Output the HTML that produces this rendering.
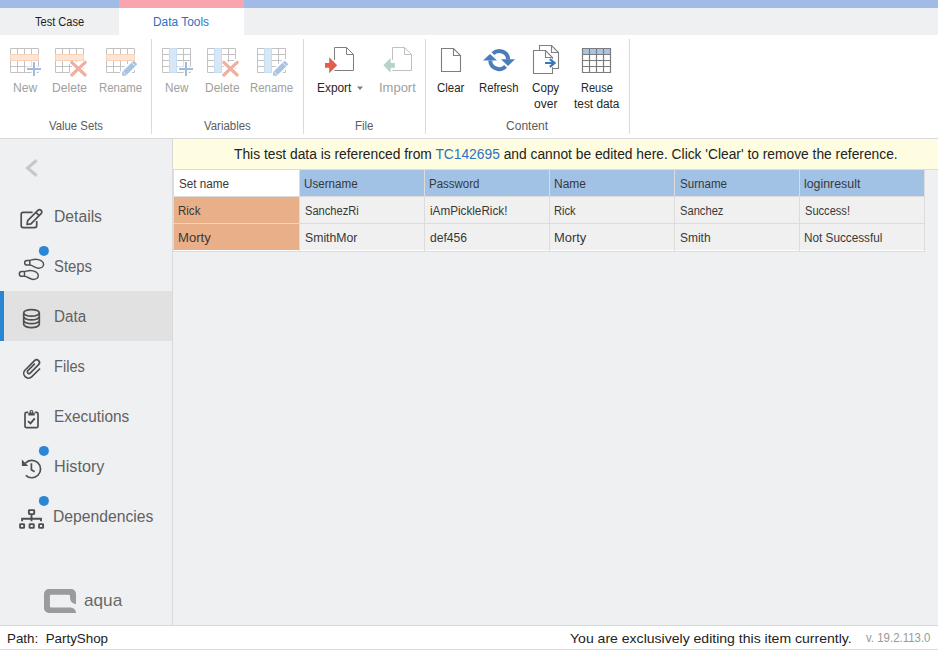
<!DOCTYPE html>
<html><head><meta charset="utf-8">
<style>
*{margin:0;padding:0;box-sizing:border-box}
html,body{width:938px;height:650px;overflow:hidden;background:#fff;font-family:"Liberation Sans",sans-serif}
body{position:relative}
.a{position:absolute}
.t{position:absolute;line-height:1;white-space:pre;transform-origin:0 0}
.c{text-align:center}
svg{position:absolute;overflow:visible}
.rb{font-size:11.6px;color:#a2a2a2;top:82.4px}
.gl{font-size:11.4px;color:#5c5c5c;top:120.6px}
.rk{font-size:11.6px;color:#2a2a2a}
.sl{font-size:16px;color:#626262;left:53.6px;transform:scaleX(0.965);transform-origin:0 0}
.td{font-size:11.5px;color:#383838}
</style></head><body>
<!-- top color bar -->
<div class="a" style="left:0;top:0;width:938px;height:8px;background:#9fbbe6"></div>
<div class="a" style="left:119px;top:0;width:125px;height:8px;background:#f8a5ae"></div>
<!-- tab strip -->
<div class="a" style="left:0;top:8px;width:938px;height:27px;background:#eff0f2"></div>
<div class="a" style="left:119px;top:8px;width:125px;height:27px;background:#fff"></div>

<!-- ribbon separators -->
<div class="a" style="left:151px;top:39px;width:1px;height:95px;background:#dadada"></div>
<div class="a" style="left:303px;top:39px;width:1px;height:95px;background:#dadada"></div>
<div class="a" style="left:425px;top:39px;width:1px;height:95px;background:#dadada"></div>
<div class="a" style="left:629px;top:39px;width:1px;height:95px;background:#dadada"></div>
<div class="a" style="left:0;top:138px;width:938px;height:1px;background:#d9d9d9"></div>

<!-- ribbon labels -->




<!-- ribbon icons -->
<svg width="938" height="140" style="left:0;top:0">
  <defs>
    <path id="g4" d="M0.5,0.5H28.5V24.5H0.5Z M7.5,0.5V24.5 M14.5,0.5V24.5 M21.5,0.5V24.5 M0.5,6.5H28.5 M0.5,12.5H28.5 M0.5,18.5H28.5" fill="none" stroke="#c2c2c2" stroke-width="1"/>
    <rect id="bandR" x="0.5" y="6.5" width="28" height="6" fill="#fde5d5" stroke="#f9d2b8" stroke-width="1"/>
    <rect id="bandC" x="7.5" y="0.5" width="7" height="24" fill="#d7e7f6" stroke="#c6ddf3" stroke-width="1"/>
    <path id="plusH" d="M24,13V29 M16,21H32" stroke="#fff" stroke-width="5"/>
    <path id="plus" d="M24,14V28 M17,21H31" stroke="#9fbbdc" stroke-width="2"/>
    <path id="xxH" d="M16.5,13.5L30.5,27.5 M30.5,13.5L16.5,27.5" stroke="#fff" stroke-width="6.5" stroke-linecap="round"/>
    <path id="xx" d="M16.8,14.3L30.2,27 M30.2,14.3L16.8,27" stroke="#edb0a2" stroke-width="3.2" stroke-linecap="round"/>
    <g id="penH" transform="translate(16.1,27.8) rotate(-45)">
      <path d="M0,0 L2.6,-2.6 H18 A1,1 0 0 1 19,-1.6 V1.6 A1,1 0 0 1 18,2.6 H2.6 Z" fill="#fff" stroke="#fff" stroke-width="4" stroke-linejoin="round"/>
    </g>
    <g id="pen" transform="translate(16.1,27.8) rotate(-45)">
      <path d="M0,0 L2.6,-2.6 H18 A1,1 0 0 1 19,-1.6 V1.6 A1,1 0 0 1 18,2.6 H2.6 Z" fill="#a8c3e2"/>
      <path d="M3.6,-2.8V2.8 M16.1,-2.8V2.8" stroke="#fff" stroke-width="0.7"/>
    </g>
  </defs>
  <!-- Value sets -->
  <g transform="translate(10,48)"><use href="#g4"/><use href="#plusH"/><use href="#bandR"/><use href="#plus"/></g>
  <g transform="translate(55,48)"><use href="#g4"/><use href="#xxH"/><use href="#bandR"/><use href="#xx"/></g>
  <g transform="translate(106,48)"><use href="#g4"/><use href="#penH"/><use href="#bandR"/><use href="#pen"/></g>
  <!-- Variables -->
  <g transform="translate(162,48)"><use href="#g4"/><use href="#plusH"/><use href="#bandC"/><use href="#plus"/></g>
  <g transform="translate(207,48)"><use href="#g4"/><use href="#xxH"/><use href="#bandC"/><use href="#xx"/></g>
  <g transform="translate(257,48)"><use href="#g4"/><use href="#penH"/><use href="#bandC"/><use href="#pen"/></g>
  <!-- Export -->
  <path d="M334.5,60V47.5H346.5L353.5,54.5V70.5H334.5 M346.5,47.5V54.5H353.5" fill="none" stroke="#7f7f7f" stroke-width="1"/>
  <path d="M325,63H329.2V57.2L337.2,65.3L329.2,73.3V67.8H325Z" fill="#e0604a"/>
  <path d="M357,86.5H363L360,90Z" fill="#7a7a7a"/>
  <!-- Import -->
  <path d="M392.5,60V47.5H404.5L411.5,54.5V70.5H392.5 M404.5,47.5V54.5H411.5" fill="none" stroke="#c0c0c0" stroke-width="1"/>
  <path d="M394.9,63H390.7V58L383.3,65.3L390.7,72.7V67.8H394.9Z" fill="#b3d4c7"/>
  <!-- Clear -->
  <path d="M441.5,48.5H453.5L460.5,55.5V71.5H441.5Z M453.5,48.5V55.5H460.5" fill="#fff" stroke="#7f7f7f" stroke-width="1.1"/>
  <!-- Refresh -->
  <g fill="none" stroke="#4a7ebb" stroke-width="4">
    <path d="M492.9,53.6A9,9 0 0 1 508.2,59.5"/>
    <path d="M490.2,60.5A9,9 0 0 0 505.6,66.4"/>
  </g>
  <path d="M501,59.3H515L508,66Z M483,60.5H497L490,53.9Z" fill="#4a7ebb"/>
  <!-- Copy over -->
  <path d="M539.5,50.5V45.5H551.5L558.5,52.5V68.5H552.5 M551.5,45.5V52.5H558.5" fill="none" stroke="#7f7f7f" stroke-width="1.1"/>
  <path d="M533.5,50.5H545.5L552.5,57.5V73.5H533.5Z M545.5,50.5V57.5H552.5" fill="#fff" stroke="#7f7f7f" stroke-width="1.1"/>
  <path d="M549.8,59.2L554.5,63L549.8,66.8" fill="none" stroke="#fff" stroke-width="4"/>
  <path d="M545,63H554.5 M549.8,59.2L554.5,63L549.8,66.8" fill="none" stroke="#3c75b9" stroke-width="2.2"/>
  <!-- Reuse -->
  <rect x="582.5" y="48.5" width="28" height="6" fill="#a9c5e6"/>
  <path d="M582.5,48.5H610.5V72.5H582.5Z M589.5,48.5V72.5 M596.5,48.5V72.5 M603.5,48.5V72.5 M582.5,54.5H610.5 M582.5,60.5H610.5 M582.5,66.5H610.5" fill="none" stroke="#7c7c7c" stroke-width="1.2"/>
</svg>

<!-- sidebar -->
<div class="a" style="left:0;top:139px;width:172px;height:486px;background:#eff0f2"></div>
<div class="a" style="left:172px;top:139px;width:1px;height:486px;background:#d9d9d9"></div>
<div class="a" style="left:0;top:291px;width:172px;height:50px;background:#e1e1e1"></div>
<div class="a" style="left:0;top:291px;width:4px;height:50px;background:#2a86d3"></div>

<svg width="172" height="625" style="left:0;top:0">
  <path d="M36.6,160.3L27.6,168L36.6,175.7" fill="none" stroke="#c8c8c8" stroke-width="3.1"/>
  <g fill="none" stroke="#4f4f4f" stroke-width="1.7">
    <!-- details -->
    <path d="M32.6,212.3H23.2A2,2 0 0 0 21.2,214.3V225.6A2,2 0 0 0 23.2,227.6H34.7A2,2 0 0 0 36.7,225.6V221"/>
    <g transform="translate(29.3,222.25) rotate(-45)">
      <path d="M-3.2,0 L0,-2.3 H14.4 A2.3,2.3 0 0 1 14.4,2.3 H0 Z" stroke-linejoin="round"/>
      <path d="M11.6,-2.3V2.3"/>
    </g>
    <!-- steps -->
    <g id="foot"><path d="M27,260.4 H29.8 C31.5,260.2 33,259.2 35.5,259.2 C39.5,259.2 43.6,261.6 43.6,264.2 C43.6,266.8 41,268.2 38.5,268.2 C35.5,268.2 32.5,265.2 29.8,265.1 H27 A2.35,2.35 0 0 1 27,260.4 Z M29.8,260.4V265.1" stroke-width="1.5"/></g>
    <use href="#foot" transform="translate(-5.3,11.2)"/>
    <!-- data -->
    <ellipse cx="31.5" cy="312.9" rx="7.8" ry="3.3"/>
    <path d="M23.7,312.9V324.3A7.8,3.3 0 0 0 39.3,324.3V312.9 M23.7,316.6A7.8,3.3 0 0 0 39.3,316.6 M23.7,320.4A7.8,3.3 0 0 0 39.3,320.4"/>
    <!-- files -->
    <g transform="translate(32.2,369) rotate(45) scale(0.95)">
      <path d="M5.5,-5.5 V6 A5,5 0 0 1 -4.5,6 V-8 A3,3 0 0 1 1.5,-8 V4.5 A1.75,1.75 0 0 1 -2,4.5 V-5.25" stroke-width="1.8" stroke-linecap="round"/>
    </g>
    <!-- executions -->
    <path d="M28.3,412.4H26.5A1.5,1.5 0 0 0 25,413.9V426.2A1.5,1.5 0 0 0 26.5,427.7H36.5A1.5,1.5 0 0 0 38,426.2V413.9A1.5,1.5 0 0 0 36.5,412.4H34.7"/>
    
    <path d="M28,421.1L30.5,423.4L34.8,418.3" stroke-width="1.9"/>
    <!-- history -->
    <path d="M25.8,475.3A8.7,8.7 0 1 0 25.4,463.2"/>
    <path d="M31.4,463.2V469.7L34.6,471.8"/>
    <!-- dependencies -->
    <g stroke-width="1.9"><rect x="28.9" y="510.1" width="5.3" height="4" rx="0.5"/>
    <path d="M31.5,514.1V518.8 M22.1,521.3V518.8H41V521.3 M31.5,518.8V521.3"/>
    <rect x="20.1" y="524.1" width="4" height="3.8" rx="0.5"/>
    <rect x="29.6" y="524.1" width="4.2" height="3.8" rx="0.5"/>
    <rect x="39.1" y="524.1" width="4" height="3.8" rx="0.5"/></g>
  </g>
  <path d="M21.9,459.6V466.1H28.2Z" fill="#4f4f4f"/>
  <path d="M28.3,415.4V412.9H29.4L29.6,411.3A1.85,1.85 0 0 1 33.2,411.3L33.4,412.9H34.7V415.4Z M30.7,411.7A0.75,0.75 0 1 0 32.2,411.7A0.75,0.75 0 1 0 30.7,411.7Z" fill="#4f4f4f" fill-rule="evenodd"/>
  <circle cx="43.9" cy="250.9" r="5" fill="#2b87d6"/>
  <circle cx="43.9" cy="450.9" r="5" fill="#2b87d6"/>
  <circle cx="43.9" cy="500.9" r="5" fill="#2b87d6"/>
  <!-- logo -->
  <path d="M49,589H71A5,5 0 0 1 76,594V604A6,6 0 0 1 70,598V596A1.3,1.3 0 0 0 68.7,594.7H51.2A1.3,1.3 0 0 0 49.9,596V606.2A1.3,1.3 0 0 0 51.2,607.5H70.5A5.5,5.5 0 0 1 76,613H49A5,5 0 0 1 44,608V594A5,5 0 0 1 49,589Z" fill="#9b9b9b"/>
</svg>

<!-- content area -->
<div class="a" style="left:173px;top:139px;width:765px;height:486px;background:#eff0f2"></div>
<div class="a" style="left:173px;top:139px;width:765px;height:30px;background:#fefde1"></div>
<div class="a" style="left:173px;top:169px;width:765px;height:1px;background:#dcdcdc"></div>

<!-- table -->
<div class="a" style="left:173px;top:170px;width:752px;height:82px;background:#dcdcdc"></div>
<div class="a" style="left:174px;top:250px;width:125px;height:1px;background:#fff"></div>
<div class="a" style="left:300px;top:250px;width:124px;height:1px;background:#fff"></div>
<div class="a" style="left:425px;top:250px;width:124px;height:1px;background:#fff"></div>
<div class="a" style="left:550px;top:250px;width:124px;height:1px;background:#fff"></div>
<div class="a" style="left:675px;top:250px;width:124px;height:1px;background:#fff"></div>
<div class="a" style="left:800px;top:250px;width:124px;height:1px;background:#fff"></div>
<div class="a" style="left:174px;top:170px;width:125px;height:26px;background:#fff"></div>
<div class="a" style="left:300px;top:170px;width:124px;height:26px;background:#a1c1e5"></div>
<div class="a" style="left:425px;top:170px;width:124px;height:26px;background:#a1c1e5"></div>
<div class="a" style="left:550px;top:170px;width:124px;height:26px;background:#a1c1e5"></div>
<div class="a" style="left:675px;top:170px;width:124px;height:26px;background:#a1c1e5"></div>
<div class="a" style="left:800px;top:170px;width:124px;height:26px;background:#a1c1e5"></div>

<div class="a" style="left:174px;top:197px;width:125px;height:26px;background:#e9af89"></div>
<div class="a" style="left:300px;top:197px;width:124px;height:26px;background:#f0f0f0"></div>
<div class="a" style="left:425px;top:197px;width:124px;height:26px;background:#f0f0f0"></div>
<div class="a" style="left:550px;top:197px;width:124px;height:26px;background:#f0f0f0"></div>
<div class="a" style="left:675px;top:197px;width:124px;height:26px;background:#f0f0f0"></div>
<div class="a" style="left:800px;top:197px;width:124px;height:26px;background:#f0f0f0"></div>

<div class="a" style="left:174px;top:224px;width:125px;height:26px;background:#e9af89"></div>
<div class="a" style="left:300px;top:224px;width:124px;height:26px;background:#f0f0f0"></div>
<div class="a" style="left:425px;top:224px;width:124px;height:26px;background:#f0f0f0"></div>
<div class="a" style="left:550px;top:224px;width:124px;height:26px;background:#f0f0f0"></div>
<div class="a" style="left:675px;top:224px;width:124px;height:26px;background:#f0f0f0"></div>
<div class="a" style="left:800px;top:224px;width:124px;height:26px;background:#f0f0f0"></div>




<!-- status bar -->
<div class="a" style="left:0;top:625px;width:938px;height:1px;background:#d9d9d9"></div>
<div class="a" style="left:0;top:626px;width:938px;height:23px;background:#fff"></div>
<div class="a" style="left:0;top:649px;width:938px;height:1px;background:#d9d9d9"></div>
<div class="t" style="left:34.92px;top:15.84px;font-size:12px;color:#1e1e1e;transform:scaleX(0.9219)">Test Case</div>
<div class="t" style="left:153.31px;top:15.84px;font-size:12px;color:#2f70c0;transform:scaleX(0.9927)">Data Tools</div>
<div class="t" style="left:12.70px;top:81.84px;font-size:12px;color:#a0a0a0;transform:scaleX(1.0043)">New</div>
<div class="t" style="left:52.49px;top:81.84px;font-size:12px;color:#a0a0a0;transform:scaleX(1.0120)">Delete</div>
<div class="t" style="left:98.75px;top:81.84px;font-size:12px;color:#a0a0a0;transform:scaleX(0.9521)">Rename</div>
<div class="t" style="left:164.52px;top:81.84px;font-size:12px;color:#a0a0a0;transform:scaleX(0.9783)">New</div>
<div class="t" style="left:204.50px;top:81.84px;font-size:12px;color:#a0a0a0;transform:scaleX(0.9970)">Delete</div>
<div class="t" style="left:250.45px;top:81.84px;font-size:12px;color:#a0a0a0;transform:scaleX(0.9498)">Rename</div>
<div class="t" style="left:317.31px;top:81.84px;font-size:12px;color:#262626;transform:scaleX(0.9911)">Export</div>
<div class="t" style="left:379.21px;top:81.84px;font-size:12px;color:#a0a0a0;transform:scaleX(1.0823)">Import</div>
<div class="t" style="left:436.93px;top:81.84px;font-size:12px;color:#262626;transform:scaleX(0.9534)">Clear</div>
<div class="t" style="left:478.56px;top:81.84px;font-size:12px;color:#262626;transform:scaleX(0.9404)">Refresh</div>
<div class="t" style="left:532.22px;top:81.84px;font-size:12px;color:#262626;transform:scaleX(0.9708)">Copy</div>
<div class="t" style="left:580.88px;top:81.84px;font-size:12px;color:#262626;transform:scaleX(0.9187)">Reuse</div>
<div class="t" style="left:534.00px;top:97.84px;font-size:12px;color:#262626;transform:scaleX(1.0044)">over</div>
<div class="t" style="left:574.40px;top:97.84px;font-size:12px;color:#262626;transform:scaleX(0.9869)">test data</div>
<div class="t" style="left:48.61px;top:119.84px;font-size:12px;color:#5c5c5c;transform:scaleX(0.9452)">Value Sets</div>
<div class="t" style="left:204.40px;top:119.84px;font-size:12px;color:#5c5c5c;transform:scaleX(0.9506)">Variables</div>
<div class="t" style="left:355.04px;top:119.84px;font-size:12px;color:#5c5c5c;transform:scaleX(0.9551)">File</div>
<div class="t" style="left:506.20px;top:119.84px;font-size:12px;color:#5c5c5c;transform:scaleX(1.0024)">Content</div>
<div class="t" style="left:53.82px;top:209.46px;font-size:16px;color:#626262;transform:scaleX(0.9809)">Details</div>
<div class="t" style="left:54.15px;top:259.46px;font-size:16px;color:#626262;transform:scaleX(0.9270)">Steps</div>
<div class="t" style="left:53.96px;top:309.46px;font-size:16px;color:#626262;transform:scaleX(0.9508)">Data</div>
<div class="t" style="left:53.91px;top:359.46px;font-size:16px;color:#626262;transform:scaleX(0.9122)">Files</div>
<div class="t" style="left:53.55px;top:409.46px;font-size:16px;color:#626262;transform:scaleX(0.9607)">Executions</div>
<div class="t" style="left:53.78px;top:459.46px;font-size:16px;color:#626262;transform:scaleX(1.0124)">History</div>
<div class="t" style="left:53.42px;top:509.46px;font-size:16px;color:#626262;transform:scaleX(0.9811)">Dependencies</div>
<div class="t" style="left:83.99px;top:591.61px;font-size:17px;color:#686868;transform:scaleX(1.0108)">aqua</div>
<div class="t" style="left:178.61px;top:177.84px;font-size:12px;color:#383838;transform:scaleX(0.9742)">Set name</div>
<div class="t" style="left:304.43px;top:177.84px;font-size:12px;color:#383838;transform:scaleX(0.9703)">Username</div>
<div class="t" style="left:429.34px;top:177.84px;font-size:12px;color:#383838;transform:scaleX(0.9568)">Password</div>
<div class="t" style="left:554.30px;top:177.84px;font-size:12px;color:#383838;transform:scaleX(0.9967)">Name</div>
<div class="t" style="left:679.82px;top:177.84px;font-size:12px;color:#383838;transform:scaleX(0.9644)">Surname</div>
<div class="t" style="left:804.48px;top:177.84px;font-size:12px;color:#383838;transform:scaleX(1.0297)">loginresult</div>
<div class="t" style="left:178.14px;top:204.84px;font-size:12px;color:#383838;transform:scaleX(0.9596)">Rick</div>
<div class="t" style="left:304.84px;top:204.84px;font-size:12px;color:#383838;transform:scaleX(0.9277)">SanchezRi</div>
<div class="t" style="left:429.52px;top:204.84px;font-size:12px;color:#383838;transform:scaleX(0.9755)">iAmPickleRick!</div>
<div class="t" style="left:554.37px;top:204.84px;font-size:12px;color:#383838;transform:scaleX(0.9283)">Rick</div>
<div class="t" style="left:679.84px;top:204.84px;font-size:12px;color:#383838;transform:scaleX(0.9298)">Sanchez</div>
<div class="t" style="left:804.84px;top:204.84px;font-size:12px;color:#383838;transform:scaleX(0.9236)">Success!</div>
<div class="t" style="left:178.01px;top:231.84px;font-size:12px;color:#383838;transform:scaleX(1.0897)">Morty</div>
<div class="t" style="left:304.79px;top:231.84px;font-size:12px;color:#383838;transform:scaleX(1.0217)">SmithMor</div>
<div class="t" style="left:429.80px;top:231.84px;font-size:12px;color:#383838;transform:scaleX(1.0084)">def456</div>
<div class="t" style="left:554.22px;top:231.84px;font-size:12px;color:#383838;transform:scaleX(1.0759)">Morty</div>
<div class="t" style="left:679.80px;top:231.84px;font-size:12px;color:#383838;transform:scaleX(0.9966)">Smith</div>
<div class="t" style="left:804.32px;top:231.84px;font-size:12px;color:#383838;transform:scaleX(0.9796)">Not Successful</div>
<div class="t" style="left:233.90px;top:147.15px;font-size:14px;color:#222;transform:scaleX(0.9853)">This test data is referenced from <span style="color:#2c72c4">TC142695</span> and cannot be edited here. Click 'Clear' to remove the reference.</div>
<div class="t" style="left:6.69px;top:631.74px;font-size:13.3px;color:#222;transform:scaleX(1.0051)">Path:  PartyShop</div>
<div class="t" style="left:569.68px;top:631.74px;font-size:13.3px;color:#222;transform:scaleX(1.0558)">You are exclusively editing this item currently.</div>
<div class="t" style="left:866.30px;top:632.42px;font-size:12.5px;color:#999;transform:scaleX(0.9156)">v. 19.2.113.0</div>
</body></html>
